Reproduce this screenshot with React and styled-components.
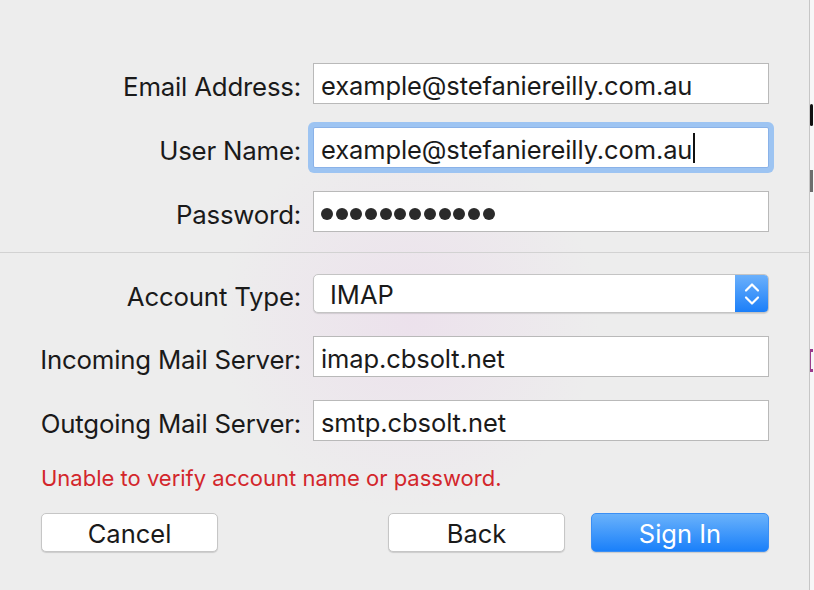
import React from "react";
import styled, { createGlobalStyle } from "styled-components";

const GlobalStyle = createGlobalStyle`
  body {
    margin: 0;
    background: #ffffff;
    font-family: Inter, "Liberation Sans", sans-serif;
    color: #1c1c1c;
  }
`;

const Page = styled.div`
  display: flex;
  width: 814px;
  height: 590px;
  overflow: hidden;
`;

const Panel = styled.div`
  width: 810px;
  height: 590px;
  box-sizing: border-box;
  flex-shrink: 0;
  padding-top: 63px;
  border-right: 1px solid #c6c6c6;
  background:
    radial-gradient(circle at 410px 320px, rgba(236, 224, 236, 0.9), rgba(236, 236, 236, 0) 190px),
    #ededed;
`;

const Backdrop = styled.div`
  position: relative;
  flex: 1;
  background: #f7f7f7;
`;

const Fragment = styled.div`
  position: absolute;
  left: ${(p) => p.x}px;
  top: ${(p) => p.y}px;
  width: ${(p) => p.w}px;
  height: ${(p) => p.h}px;
  background: ${(p) => p.color};
  border-radius: ${(p) => p.r || 0}px;
`;

const Form = styled.div`
  display: grid;
  grid-template-columns: 301px 456px;
  column-gap: 12px;
  row-gap: ${(p) => p.gap}px;
  align-items: center;
`;

const Label = styled.div`
  text-align: right;
  padding-top: 5px;
  font-size: 25.8px;
  letter-spacing: -0.2px;
  color: #1a1a1a;
  white-space: nowrap;
`;

const Field = styled.div`
  position: relative;
  height: 41px;
  box-sizing: border-box;
  display: flex;
  align-items: center;
  padding: 4px 0 0 7px;
  background: #fff;
  border: 1px solid ${(p) => (p.focused ? "#8ab2e8" : "#b9b9b9")};
  font-size: 25.5px;
  letter-spacing: -0.1px;
  color: #1a1a1a;
  box-shadow: ${(p) => (p.focused ? "0 0 0 5px #9dc4f2" : "none")};
  border-radius: ${(p) => (p.focused ? "2px" : "0")};
`;

const Caret = styled.span`
  display: inline-block;
  width: 2px;
  height: 30px;
  margin: -3px 0 0 1px;
  background: #111;
`;

const Dots = styled.div`
  display: flex;
  gap: 2.7px;
`;

const Dot = styled.span`
  width: 12px;
  height: 12px;
  border-radius: 50%;
  background: #2a2a2a;
`;

const Divider = styled.div`
  height: 1px;
  background: #d2d2d2;
  margin: 20px 0 21px;
`;

const Popup = styled.div`
  height: 39px;
  box-sizing: border-box;
  display: flex;
  align-items: stretch;
  border: 1px solid #c4c4c4;
  border-radius: 5px;
  background: #fff;
  box-shadow: 0 1px 1px rgba(0, 0, 0, 0.12);
  overflow: hidden;
`;

const PopupText = styled.div`
  flex: 1;
  display: flex;
  align-items: center;
  padding: 2px 0 0 16px;
  font-size: 25.5px;
  color: #1a1a1a;
`;

const Stepper = styled.div`
  width: 33px;
  display: flex;
  align-items: center;
  justify-content: center;
  background: linear-gradient(#6bb0fb, #1b7ff9);
`;

const ErrorText = styled.div`
  margin: 24px 0 0 41px;
  font-size: 22px;
  color: #d3262b;
`;

const Buttons = styled.div`
  display: flex;
  margin: 22px 0 0 41px;
  width: 728px;
`;

const Button = styled.div`
  width: ${(p) => p.w}px;
  height: 39px;
  box-sizing: border-box;
  display: flex;
  align-items: center;
  justify-content: center;
  padding-top: 1px;
  border-radius: 5px;
  font-size: 25.5px;
  margin-left: ${(p) => p.ml || 0}px;
  color: ${(p) => (p.primary ? "#fff" : "#1a1a1a")};
  background: ${(p) => (p.primary ? "linear-gradient(#6ab2fb, #1a80fa)" : "#fff")};
  border: 1px solid ${(p) => (p.primary ? "#3b8ff4" : "#c6c6c6")};
  box-shadow: 0 1px 1px rgba(0, 0, 0, 0.14);
`;

const Chevrons = () => (
  <svg width="18" height="26" viewBox="0 0 18 26" fill="none" stroke="#fff" strokeWidth="2.2" strokeLinecap="round" strokeLinejoin="round">
    <path d="M3 9.5 L9 3.5 L15 9.5" />
    <path d="M3 16.5 L9 22.5 L15 16.5" />
  </svg>
);

export default function App() {
  return (
    <Page>
      <GlobalStyle />
      <Panel>
        <Form gap={23}>
          <Label>Email Address:</Label>
          <Field>example@stefaniereilly.com.au</Field>
          <Label>User Name:</Label>
          <Field focused>
            example@stefaniereilly.com.au<Caret />
          </Field>
          <Label>Password:</Label>
          <Field>
            <Dots>
              {Array.from({ length: 12 }).map((_, i) => (
                <Dot key={i} />
              ))}
            </Dots>
          </Field>
        </Form>
        <Divider />
        <Form gap={23}>
          <Label>Account Type:</Label>
          <Popup>
            <PopupText>IMAP</PopupText>
            <Stepper>
              <Chevrons />
            </Stepper>
          </Popup>
          <Label>Incoming Mail Server:</Label>
          <Field>imap.cbsolt.net</Field>
          <Label>Outgoing Mail Server:</Label>
          <Field>smtp.cbsolt.net</Field>
        </Form>
        <ErrorText>Unable to verify account name or password.</ErrorText>
        <Buttons>
          <Button w={177}>Cancel</Button>
          <Button w={177} ml={170}>Back</Button>
          <Button w={178} ml={26} primary>Sign In</Button>
        </Buttons>
      </Panel>
      <Backdrop>
        <Fragment x={0} y={104} w={3} h={22} r={2} color="#111" />
        <Fragment x={0} y={170} w={3} h={22} color="#6d6d6d" />
        <Fragment x={0} y={349} w={3} h={3} color="#9b3b8c" />
        <Fragment x={0} y={349} w={1} h={22} color="#9b3b8c" />
        <Fragment x={0} y={369} w={3} h={3} color="#9b3b8c" />
      </Backdrop>
    </Page>
  );
}
